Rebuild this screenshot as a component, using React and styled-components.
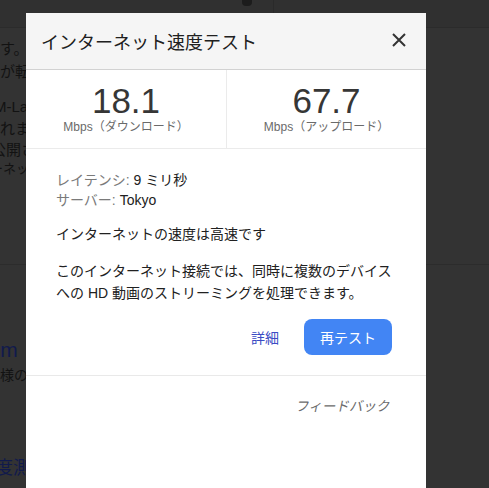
import React from "react";
import styled, { createGlobalStyle } from "styled-components";

const Global = createGlobalStyle`
  html, body { margin: 0; padding: 0; }
  body {
    background: #333333;
    font-family: "Liberation Sans", "Noto Sans CJK JP", sans-serif;
    overflow: hidden;
  }
  #root { width: 489px; height: 488px; position: relative; overflow: hidden; }
`;

/* ---------- dimmed page behind the dialog ---------- */
const Page = styled.div`
  width: 489px;
  height: 488px;
  background: #333333;
  display: flex;
  flex-direction: column;
`;

const TopBar = styled.div`
  height: 28px;
  flex: none;
  background: #303030;
  border-bottom: 1px solid #2b2b2b;
  display: flex;
  align-items: flex-start;
  padding-left: 242px;
  gap: 21px;
  box-sizing: border-box;
`;

const TopGlyph = styled.div`
  width: 10px;
  height: 6px;
  background: #1c1c1c;
  border-radius: 0 0 4px 4px;
`;

const TopDivider = styled.div`
  width: 1px;
  height: 28px;
  background: #2a2a2a;
`;

const PageBody = styled.div`
  display: flex;
  flex-direction: column;
  padding-top: 10px;
`;

const BgLine = styled.div`
  font-size: ${(p) => p.$size || 15}px;
  line-height: ${(p) => p.$lh || 22}px;
  color: ${(p) => (p.$link ? "#111a4c" : "#121212")};
  margin-left: ${(p) => p.$shift || 0}px;
  margin-top: ${(p) => p.$mt || 0}px;
  white-space: nowrap;
`;

const BgRule = styled.div`
  height: 1px;
  background: #2c2c2c;
  margin-top: ${(p) => p.$mt || 0}px;
`;

/* ---------- dialog ---------- */
const Dialog = styled.div`
  position: absolute;
  left: 26px;
  top: 13px;
  width: 400px;
  height: 500px;
  background: #ffffff;
  display: flex;
  flex-direction: column;
`;

const Header = styled.div`
  height: 56px;
  flex: none;
  background: #f5f5f5;
  border-bottom: 1px solid #d2d2d2;
  display: flex;
  align-items: center;
  justify-content: space-between;
  padding: 0 15px 0 15px;
`;

const Title = styled.h1`
  margin: 0;
  font-size: 18px;
  font-weight: normal;
  color: #202020;
  line-height: 24px;
  padding-top: 4px;
`;

const CloseButton = styled.button`
  width: 24px;
  height: 24px;
  border: none;
  background: none;
  padding: 0;
  display: flex;
  align-items: center;
  justify-content: center;
  cursor: pointer;
  margin-top: -2px;
`;

const Speeds = styled.div`
  display: grid;
  grid-template-columns: 1fr 1fr;
  height: 78px;
  flex: none;
  border-bottom: 1px solid #ebebeb;
`;

const SpeedCell = styled.div`
  display: flex;
  flex-direction: column;
  align-items: center;
  padding-top: 13px;
  border-left: ${(p) => (p.$divided ? "1px solid #ebebeb" : "none")};
`;

const SpeedValue = styled.div`
  font-size: 35px;
  line-height: 35px;
  color: #363636;
`;

const SpeedLabel = styled.div`
  font-size: 12px;
  line-height: 14px;
  color: #6a6a6a;
  margin-top: 2px;
`;

const Details = styled.div`
  padding: 21px 30px 0 30px;
  display: flex;
  flex-direction: column;
`;

const InfoRow = styled.div`
  font-size: 14px;
  line-height: 20px;
  color: #212121;
`;

const InfoKey = styled.span`
  color: #7a7a7a;
`;

const Message = styled.p`
  margin: ${(p) => p.$mt}px 0 0 0;
  font-size: 14px;
  line-height: ${(p) => p.$lh}px;
  color: #212121;
`;

const Actions = styled.div`
  display: flex;
  justify-content: flex-end;
  align-items: center;
  gap: 25px;
  padding: 15px 34px 20px 30px;
  border-bottom: 1px solid #e9e9e9;
`;

const LinkButton = styled.a`
  font-size: 14px;
  color: #3b4cc4;
  text-decoration: none;
  cursor: pointer;
`;

const PrimaryButton = styled.button`
  height: 36px;
  width: 88px;
  border: none;
  border-radius: 8px;
  background: #4285f4;
  color: #ffffff;
  font-family: inherit;
  font-size: 14px;
  cursor: pointer;
  padding: 0;
`;

const Footer = styled.div`
  display: flex;
  justify-content: flex-end;
  padding: 21px 36px 0 30px;
`;

const FeedbackLink = styled.a`
  display: inline-block;
  font-size: 13.5px;
  line-height: 20px;
  color: #6b6b6b;
  cursor: pointer;
  transform: skewX(-12deg);
`;

const CloseIcon = () => (
  <svg width="14" height="14" viewBox="0 0 14 14">
    <path d="M1 1 L13 13 M13 1 L1 13" stroke="#333" strokeWidth="2" strokeLinecap="butt" />
  </svg>
);

export default function App() {
  return (
    <>
      <Global />
      <Page>
        <TopBar>
          <TopGlyph />
          <TopDivider />
        </TopBar>
        <PageBody>
          <BgLine>す。alt 速度テストで確認できます</BgLine>
          <BgLine $lh={23}>が転送される速度を測定します</BgLine>
          <BgLine $shift={-6} $mt={13}>M-Lab と提携して実施さ</BgLine>
          <BgLine $lh={21}>れます。テストの結果は</BgLine>
          <BgLine $shift={-9} $lh={21}>公開されます</BgLine>
          <BgLine $size={13} $lh={17} $shift={-10}>ーネット速度</BgLine>
          <BgRule $mt={87} />
          <BgLine $link $size={21} $lh={26} $shift={-22} $mt={72}>com</BgLine>
          <BgLine $size={14} $lh={20} $mt={2}>様のインターネット</BgLine>
          <BgLine $link $size={18} $lh={26} $shift={-23} $mt={70}>速度測定</BgLine>
        </PageBody>
      </Page>

      <Dialog>
        <Header>
          <Title>インターネット速度テスト</Title>
          <CloseButton aria-label="閉じる">
            <CloseIcon />
          </CloseButton>
        </Header>
        <Speeds>
          <SpeedCell>
            <SpeedValue>18.1</SpeedValue>
            <SpeedLabel>Mbps（ダウンロード）</SpeedLabel>
          </SpeedCell>
          <SpeedCell $divided>
            <SpeedValue>67.7</SpeedValue>
            <SpeedLabel>Mbps（アップロード）</SpeedLabel>
          </SpeedCell>
        </Speeds>
        <Details>
          <InfoRow>
            <InfoKey>レイテンシ: </InfoKey>9 ミリ秒
          </InfoRow>
          <InfoRow>
            <InfoKey>サーバー: </InfoKey>Tokyo
          </InfoRow>
          <Message $mt={14} $lh={20}>インターネットの速度は高速です</Message>
          <Message $mt={16} $lh={22}>
            このインターネット接続では、同時に複数のデバイスへの HD 動画のストリーミングを処理できます。
          </Message>
        </Details>
        <Actions>
          <LinkButton>詳細</LinkButton>
          <PrimaryButton>再テスト</PrimaryButton>
        </Actions>
        <Footer>
          <FeedbackLink>フィードバック</FeedbackLink>
        </Footer>
      </Dialog>
    </>
  );
}
